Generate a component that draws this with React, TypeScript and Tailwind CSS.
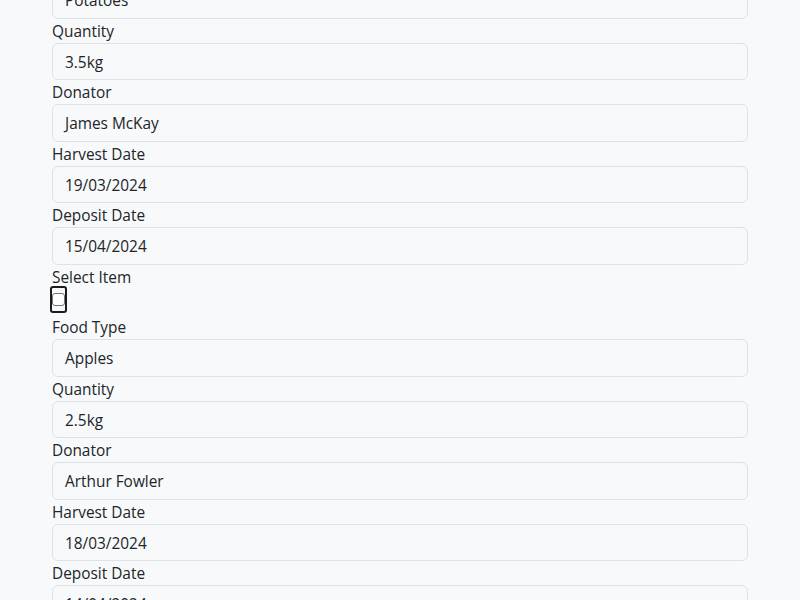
import React from "react";

type Item = {
  food: string;
  qty: string;
  donator: string;
  harvest: string;
  deposit: string;
};

const items: Item[] = [
  { food: "Potatoes", qty: "3.5kg", donator: "James McKay", harvest: "19/03/2024", deposit: "15/04/2024" },
  { food: "Apples", qty: "2.5kg", donator: "Arthur Fowler", harvest: "18/03/2024", deposit: "14/04/2024" },
];

function Field({ label, value }: { label: string; value: string }) {
  return (
    <div>
      <div className="h-6 pt-[1px] leading-6">{label}</div>
      <div className="h-[37.5px] rounded-[6px] border border-[#dee2e6] bg-[#f8f9fa] px-3 pt-[1px] leading-[35px]">
        {value}
      </div>
    </div>
  );
}

export default function App() {
  return (
    <div
      className="h-[600px] overflow-hidden bg-[#f8f9fa] text-[15.4px] text-[#212529]"
      style={{ fontFamily: '"Open Sans", "Noto Sans", sans-serif' }}
    >
      <div className="mx-auto w-[720px] px-3 -mt-[93.5px]">
        {items.map((it, i) => (
          <div key={i}>
            <div className="h-6 pt-[1px] leading-6">Select Item</div>
            <div className="relative h-[26.5px]">
              <div className="absolute -left-[2px] -top-[2.5px] flex h-[27px] w-[17px] items-center justify-center rounded-[3px] border-2 border-[#1b1b1b]">
                <div className="h-[13px] w-[13px] rounded-[3px] border border-[#767676] bg-white" />
              </div>
            </div>
            <Field label="Food Type" value={it.food} />
            <Field label="Quantity" value={it.qty} />
            <Field label="Donator" value={it.donator} />
            <Field label="Harvest Date" value={it.harvest} />
            <Field label="Deposit Date" value={it.deposit} />
          </div>
        ))}
      </div>
    </div>
  );
}
